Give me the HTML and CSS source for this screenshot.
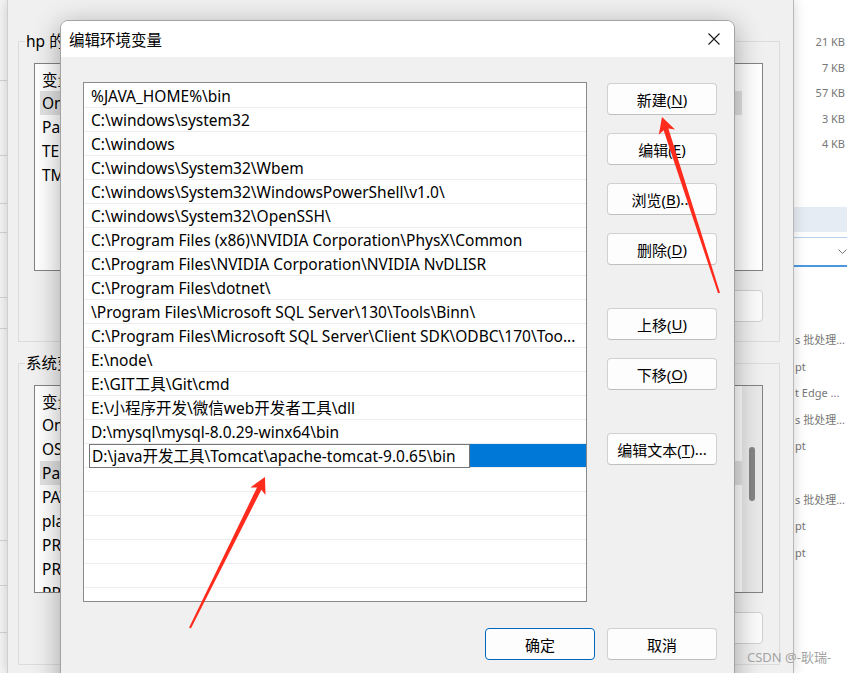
FILE: index.html
```html
<!DOCTYPE html>
<html lang="zh-CN">
<head>
<meta charset="utf-8">
<title>编辑环境变量</title>
<link rel="stylesheet" href="styles.css">
</head>
<body>
<div class="desk">
  <div class="explorer">
    <div class="ex-left">
      <div class="ln l1"></div><div class="ln l2"></div><div class="ln l3"></div>
      <div class="ln l4"></div><div class="ln l5"></div><div class="ln l6"></div>
      <div class="ln l7"></div><div class="ln l8"></div><div class="ln l9"></div>
    </div>
    <div class="ex-right">
      <div class="sizes">
        <div class="size">21 KB</div>
        <div class="size">7 KB</div>
        <div class="size">57 KB</div>
        <div class="size">3 KB</div>
        <div class="size">4 KB</div>
      </div>
      <div class="ex-band"></div>
      <div class="ex-field">
        <svg width="9" height="6" viewBox="0 0 9 6"><polyline points="0.5,0.5 4.5,4.5 8.5,0.5" fill="none" stroke="#777" stroke-width="1"/></svg>
      </div>
      <div class="types">
        <div class="type">s 批处理...</div>
        <div class="type">pt</div>
        <div class="type">t Edge ...</div>
        <div class="type">s 批处理...</div>
        <div class="type">pt</div>
        <div class="type"></div>
        <div class="type">s 批处理...</div>
        <div class="type">pt</div>
        <div class="type">pt</div>
      </div>
    </div>
  </div>

  <div class="backwin">
    <fieldset class="group">
      <legend>hp 的用户变量(U)</legend>
      <div class="vlist">
        <div class="vcols">
          <div class="vhead">变量</div>
          <div class="vrow sel">OneDrive</div>
          <div class="vrow">Path</div>
          <div class="vrow">TEMP</div>
          <div class="vrow">TMP</div>
        </div>
        <div class="vspace"></div>
      </div>
      <div class="vbtns">
        <div class="vbtn">新建(N)...</div>
        <div class="vbtn">编辑(E)...</div>
        <div class="vbtn">删除(D)</div>
      </div>
    </fieldset>
    <fieldset class="group g2">
      <legend>系统变量(S)</legend>
      <div class="vlist">
        <div class="vcols">
          <div class="vhead">变量</div>
          <div class="vrow">OnlineServices</div>
          <div class="vrow">OS</div>
          <div class="vrow sel">Path</div>
          <div class="vrow">PATHEXT</div>
          <div class="vrow">platformcode</div>
          <div class="vrow">PROCESSOR_ARCHITECTURE</div>
          <div class="vrow">PROCESSOR_IDENTIFIER</div>
          <div class="vrow">PROCESSOR_LEVEL</div>
        </div>
        <div class="vscroll"><div class="thumb"></div></div>
      </div>
      <div class="vbtns">
        <div class="vbtn">新建(W)...</div>
        <div class="vbtn">编辑(I)...</div>
        <div class="vbtn">删除(L)</div>
      </div>
    </fieldset>
  </div>

  <div class="dialog">
    <div class="titlebar">
      <div class="title">编辑环境变量</div>
      <div class="close">
        <svg width="12" height="12" viewBox="0 0 12 12"><path d="M0.5 0.5 L11.5 11.5 M11.5 0.5 L0.5 11.5" stroke="#1b1b1b" stroke-width="1.1" fill="none"/></svg>
      </div>
    </div>
    <div class="dbody">
      <div class="plist">
        <div class="prow">%JAVA_HOME%\bin</div>
        <div class="prow">C:\windows\system32</div>
        <div class="prow">C:\windows</div>
        <div class="prow">C:\windows\System32\Wbem</div>
        <div class="prow">C:\windows\System32\WindowsPowerShell\v1.0\</div>
        <div class="prow">C:\windows\System32\OpenSSH\</div>
        <div class="prow">C:\Program Files (x86)\NVIDIA Corporation\PhysX\Common</div>
        <div class="prow">C:\Program Files\NVIDIA Corporation\NVIDIA NvDLISR</div>
        <div class="prow">C:\Program Files\dotnet\</div>
        <div class="prow">\Program Files\Microsoft SQL Server\130\Tools\Binn\</div>
        <div class="prow">C:\Program Files\Microsoft SQL Server\Client SDK\ODBC\170\Too...</div>
        <div class="prow">E:\node\</div>
        <div class="prow">E:\GIT工具\Git\cmd</div>
        <div class="prow">E:\小程序开发\微信web开发者工具\dll</div>
        <div class="prow">D:\mysql\mysql-8.0.29-winx64\bin</div>
        <div class="prow editing"><div class="edit">D:\java开发工具\Tomcat\apache-tomcat-9.0.65\bin</div><div class="hl"></div></div>
        <div class="prow"></div>
        <div class="prow"></div>
        <div class="prow"></div>
        <div class="prow"></div>
        <div class="prow"></div>
        <div class="prow"></div>
      </div>
      <div class="side">
        <div class="btn">新建(<u>N</u>)</div>
        <div class="btn">编辑(<u>E</u>)</div>
        <div class="btn">浏览(<u>B</u>)...</div>
        <div class="btn">删除(<u>D</u>)</div>
        <div class="btn sep">上移(<u>U</u>)</div>
        <div class="btn">下移(<u>O</u>)</div>
        <div class="btn sep">编辑文本(<u>T</u>)...</div>
      </div>
      <div class="foot">
        <div class="btn default">确定</div>
        <div class="btn">取消</div>
      </div>
    </div>
  </div>

  <svg class="arrows" width="847" height="673" viewBox="0 0 847 673">
    <polygon fill="#ff2b1d" points="662,117 675,129.6 668.4,128.6 720,292.7 718,293.3 663.6,130.2 658.8,134.8"/>
    <polygon fill="#ff2b1d" points="265,477 265.5,495.1 261.4,489.7 190.9,628.4 189.1,627.6 257,487.5 250.3,487.5"/>
  </svg>

  <div class="watermark">CSDN @-耿瑞-</div>
</div>
</body>
</html>
```
FILE: styles.css
```css
* { box-sizing: border-box; }
html, body { margin: 0; padding: 0; }
body {
  width: 847px;
  height: 673px;
  overflow: hidden;
  background: #fff;
  font-family: "Noto Sans", "Noto Sans CJK SC", sans-serif;
  font-size: 15.5px;
  color: #000;
}
.desk { position: relative; width: 847px; height: 673px; overflow: hidden; }

/* explorer window behind everything */
.explorer {
  position: absolute; left: 0; top: 0; width: 847px; height: 673px;
  display: flex; justify-content: space-between; background: #fff;
}
.ex-left { width: 7px; background: #f5f5f5; display: flex; flex-direction: column; }
.ex-left .ln { border-bottom: 1px solid #d4d4d4; flex: none; }
.l1 { height: 81px; } .l2 { height: 75px; } .l3 { height: 48px; }
.l4 { height: 29px; } .l5 { height: 65px; } .l6 { height: 31px; }
.l7 { height: 212px; } .l8 { height: 45px; } .l9 { height: 47px; }
.ex-right { width: 54px; display: flex; flex-direction: column; font-size: 11px; color: #777; }
.sizes { padding-top: 29px; }
.size { height: 25.5px; line-height: 25.5px; text-align: right; padding-right: 2px; white-space: nowrap; }
.ex-band { height: 25px; margin-top: 50.5px; background: #e6ecf3; }
.ex-field {
  height: 30px; margin-top: 5px;
  border-top: 1px solid #b4d2ef; border-bottom: 2px solid #4c98e0;
  display: flex; align-items: center; justify-content: flex-end; padding-right: 0;
}
.types { margin-top: 60px; padding-left: 2px; }
.type { height: 26.6px; line-height: 26.6px; white-space: nowrap; overflow: hidden; }

/* the environment variables window behind the dialog */
.backwin {
  position: absolute; left: 7px; top: 0; width: 787px; height: 673px;
  background: #f0f0f0;
  border-left: 1px solid #cfcfcf; border-right: 1px solid #b8b8b8;
  box-shadow: 0 0 12px rgba(0, 0, 0, .18);
  padding: 31px 13px 0 10px;
  display: flex; flex-direction: column;
}
.group {
  margin: 0; min-width: 0;
  border: 1px solid #dcdcdc;
  padding: 12px 0 19px 6px;
}
.group legend { padding: 0 1px; line-height: 20px; font-size: 15.5px; }
.g2 { margin-top: 11px; padding-bottom: 20px; }
.vlist {
  margin-left: 9px; width: 729px; height: 208px;
  border: 1px solid #838383; background: #fff; overflow: hidden;
  display: flex;
}
.vcols { flex: 1; min-width: 0; }
.vhead { height: 27px; padding: 4px 0 0 7px; line-height: 24px; }
.vrow { height: 24px; line-height: 24px; margin-left: 5px; padding-left: 2px; white-space: nowrap; }
.vrow.sel { background: #e2e2e2; }
.vspace { width: 20px; background: #fff; }
.vscroll { width: 20px; background: #e9e9e9; padding: 61px 0 0 7px; }
.thumb { width: 6px; height: 54px; border-radius: 3px; background: #858585; }
.vbtns { margin-left: 9px; width: 729px; margin-top: 19px; display: flex; justify-content: flex-end; gap: 12px; }
.vbtn {
  width: 110px; height: 32px; border: 1px solid #d0d0d0; border-radius: 4px;
  background: #fbfbfb; display: flex; align-items: center; justify-content: center;
}

/* front dialog */
.dialog {
  position: absolute; left: 60px; top: 20px; width: 675px; height: 690px;
  border: 1px solid #a3a3a3; border-radius: 8px 8px 0 0;
  background: #f0f0f0;
  box-shadow: 0 6px 28px rgba(0, 0, 0, .33);
  overflow: hidden;
  display: flex; flex-direction: column;
}
.titlebar { flex: none; height: 36px; background: #fff; display: flex; align-items: center; padding-left: 8px; }
.title { flex: 1; font-size: 15.5px; }
.close { width: 40px; height: 36px; display: flex; align-items: center; justify-content: center; }
.dbody {
  padding: 25px 17px 0 22px;
  display: grid; grid-template-columns: 504px 110px;
  column-gap: 20px; row-gap: 26px; align-items: start;
}
.plist {
  height: 520px; border: 1px solid #8a8a8a; background: #fff;
  padding-top: 1px; overflow: hidden;
}
.prow {
  height: 24px; border-bottom: 1px solid #ececec;
  padding-left: 7px; line-height: 24px;
  white-space: nowrap; overflow: hidden; text-overflow: ellipsis;
}
.prow.editing { display: flex; padding-left: 5px; overflow: visible; align-items: flex-start; }
.edit {
  flex: none; width: 381px; height: 24px; margin-bottom: -1px;
  border: 1px solid #767676; background: #fff;
  padding-left: 2px; line-height: 22px; white-space: nowrap; overflow: hidden;
}
.hl { flex: 1; height: 23px; background: #0078d7; }
.side { display: flex; flex-direction: column; gap: 18px; padding-top: 1px; }
.btn {
  width: 110px; height: 32px;
  border: 1px solid #d0d0d0; border-bottom-color: #bfbfbf; border-radius: 4px;
  background: #fdfdfd;
  display: flex; align-items: center; justify-content: center;
  font-size: 15px; white-space: nowrap;
}
.btn u { text-underline-offset: 2px; }
.btn.sep { margin-top: 25px; }
.btn.default { border-color: #0067c0; }
.foot { grid-column: 1 / -1; display: flex; justify-content: flex-end; gap: 12px; }

/* annotations */
.arrows { position: absolute; left: 0; top: 0; pointer-events: none; }
.watermark {
  position: absolute; left: 747px; top: 648px;
  font-size: 13px; line-height: 18px; color: #a3a3a3; white-space: nowrap;
}
```
